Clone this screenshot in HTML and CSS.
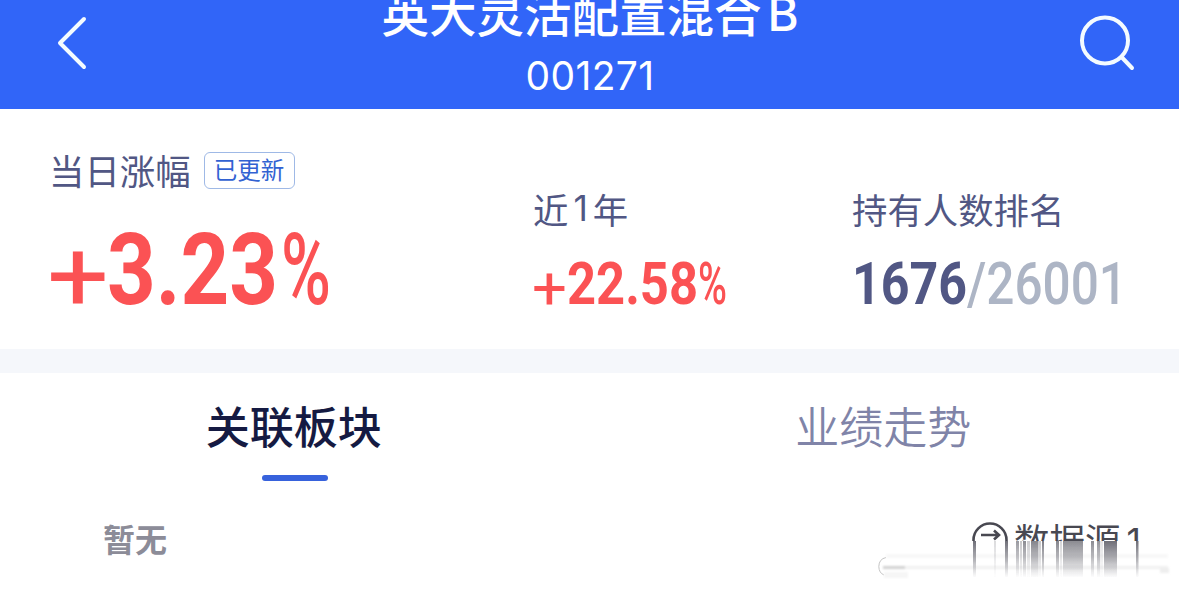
FILE: index.html
```html
<!DOCTYPE html>
<html lang="zh-CN">
<head>
    <meta charset="UTF-8">
    <meta name="viewport" content="width=device-width, initial-scale=1.0">
    <title>英大灵活配置混合B</title>
    <link rel="stylesheet" href="styles.css">
</head>
<body>
<header class="header">
    <svg class="back" viewBox="0 0 60 58" width="60" height="58">
        <path d="M29 5 L5 29 L29 53"/>
    </svg>
    <div class="title">
        <h1>英大灵活配置混合<span>B</span></h1>
        <p>001271</p>
    </div>
    <svg class="search" viewBox="0 0 60 60" width="60" height="60">
        <circle cx="28" cy="26.500" r="23"/>
        <path d="M44.500 43 L55 54"/>
    </svg>
</header>

<section class="stats">
    <div class="stat today">
        <div class="label">当日涨幅<span class="badge">已更新</span></div>
        <svg class="number red" width="290" height="90">
            <text class="sign" x="-4" y="91" font-size="100" textLength="62" lengthAdjust="spacingAndGlyphs">+</text>
            <text x="56" y="84" font-size="101" textLength="171" lengthAdjust="spacingAndGlyphs">3.23</text>
            <text class="percent" x="230" y="84" font-size="101" textLength="50" lengthAdjust="spacingAndGlyphs">%</text>
        </svg>
    </div>
    <div class="stat year">
        <div class="label">近<span class="one">1</span>年</div>
        <svg class="number red" width="220" height="60">
            <text class="sign" x="-1" y="57" font-size="59" textLength="35" lengthAdjust="spacingAndGlyphs">+</text>
            <text x="34" y="52" font-size="60" textLength="131" lengthAdjust="spacingAndGlyphs">22.58</text>
            <text class="percent" x="165" y="52" font-size="60" textLength="29" lengthAdjust="spacingAndGlyphs">%</text>
        </svg>
    </div>
    <div class="stat rank">
        <div class="label">持有人数排名</div>
        <svg class="number" width="290" height="60">
            <text class="place" x="0" y="52" font-size="60" textLength="115" lengthAdjust="spacingAndGlyphs">1676</text>
            <text class="total" x="115" y="52" font-size="60" textLength="160" lengthAdjust="spacingAndGlyphs">/26001</text>
        </svg>
    </div>
</section>

<nav class="tabs">
    <div class="tab active">关联板块</div>
    <div class="tab">业绩走势</div>
</nav>

<section class="content">
    <p class="empty">暂无</p>
    <div class="source">
        <div class="source-top">
            <svg class="source-icon" width="36" height="36" viewBox="0 0 36 36">
                <circle cx="18" cy="18" r="16.500"/>
                <path d="M9 13 H27 M22 8.500 L27 13 L22 17.500"/>
            </svg>
            <span class="source-name">数据源</span><span class="index">1</span>
        </div>
        <!-- faded lower edge of the source button -->
        <svg class="fade" width="301" height="49" viewBox="878 541 301 49">
            <defs>
                <linearGradient id="down" x1="0" y1="541" x2="0" y2="578" gradientUnits="userSpaceOnUse">
                    <stop offset="0" stop-color="#55555f" stop-opacity="0.85"/>
                    <stop offset="0.5" stop-color="#66666f" stop-opacity="0.5"/>
                    <stop offset="1" stop-color="#77777f" stop-opacity="0"/>
                </linearGradient>
                <filter id="soft" x="-10%" y="-50%" width="120%" height="200%">
                    <feGaussianBlur stdDeviation="1"/>
                </filter>
                <filter id="streak" x="-5%" y="0" width="110%" height="100%">
                    <feGaussianBlur stdDeviation="0.6 0"/>
                </filter>
            </defs>
            <path d="M886 557.500 Q879 559 878.800 566.500 Q879 573 884 575" fill="none" stroke="#c4c4c4"/>
            <g filter="url(#soft)">
                <rect x="886" y="554" width="282" height="4" fill="#f8f8f8"/>
                <rect x="884" y="566" width="284" height="3" fill="#f1f1f1"/>
                <rect x="883" y="566" width="22" height="3" fill="#d2d2d2"/>
                <rect x="1160" y="568" width="9" height="5" fill="#eee"/>
                <rect x="884" y="572" width="24" height="6" fill="#f6f6f6"/>
            </g>
            <g fill="url(#down)" filter="url(#streak)">
                <rect x="973" y="541" width="3" height="36"/>
                <rect x="994" y="541" width="2" height="36" opacity="0.25"/>
                <rect x="1005" y="541" width="3" height="36"/>
                <rect x="1016" y="541" width="3" height="36" opacity="0.7"/>
                <rect x="1020" y="541" width="2" height="36" opacity="0.4"/>
                <rect x="1023" y="541" width="3" height="36" opacity="0.8"/>
                <rect x="1027" y="541" width="3" height="36" opacity="0.35"/>
                <rect x="1031" y="541" width="7" height="36" opacity="0.85"/>
                <rect x="1038" y="541" width="3" height="36" opacity="0.4"/>
                <rect x="1042" y="541" width="2" height="36" opacity="0.9"/>
                <rect x="1056" y="541" width="3" height="36" opacity="0.85"/>
                <rect x="1060" y="541" width="2" height="36" opacity="0.3"/>
                <rect x="1063" y="541" width="20" height="36" opacity="0.8"/>
                <rect x="1091" y="541" width="3" height="36" opacity="0.8"/>
                <rect x="1097" y="541" width="3" height="36" opacity="0.75"/>
                <rect x="1100" y="541" width="3" height="36" opacity="0.2"/>
                <rect x="1104" y="541" width="13" height="36"/>
                <rect x="1136" y="541" width="2.500" height="36"/>
            </g>
        </svg>
    </div>
</section>
</body>
</html>
```

FILE: styles.css
```css
* {
    box-sizing: border-box;
    margin: 0;
    padding: 0;
}

body {
    width: 1179px;
    height: 590px;
    overflow: hidden;
    background: #fff;
    font-family: Inter, "Noto Sans CJK SC", sans-serif;
    color: #515784;
}

/* Header */
.header {
    display: flex;
    justify-content: space-between;
    height: 109px;
    padding: 14px 42px 0 55px;
    background: #3165f8;
    color: #fff;
    overflow: hidden;
}

.header svg {
    fill: none;
    stroke: #f4fbff;
    stroke-width: 4;
    stroke-linecap: round;
    stroke-linejoin: round;
}

.title {
    margin-top: -24px;
    margin-right: 12px;
    text-align: center;
}

.title h1 {
    height: 58px;
    font-size: 47.5px;
    line-height: 50px;
    font-weight: 500;
    white-space: nowrap;
}

.title h1 span {
    margin-left: 6px;
    line-height: 1;
    vertical-align: 1px;
}

.title p {
    font-size: 39px;
    line-height: 56px;
    letter-spacing: 0.4px;
}

/* Stats */
.stats {
    display: grid;
    grid-template-columns: 482px 319px 1fr;
    height: 264px;
    padding-left: 51px;
    border-bottom: 24px solid #f5f7fb;
}

.stat {
    padding-top: 78px;
}

.today {
    padding-top: 41px;
}

.label {
    display: flex;
    align-items: center;
    height: 42px;
    font-size: 35.4px;
    white-space: nowrap;
}

.today .label {
    height: 40px;
    margin: -1px 0 2px -2px;
}

.badge {
    margin: 2px 0 0 13px;
    width: 91px;
    height: 37px;
    border: 1px solid #9fb9e6;
    border-radius: 6px;
    color: #3262d2;
    font-size: 23.5px;
    line-height: 35px;
    text-align: center;
}

.one {
    margin: 0 5px;
}

.number {
    display: block;
    margin-top: 23px;
    overflow: visible;
    font-family: Roboto, sans-serif;
    font-weight: 700;
}

.today .number {
    margin-top: 31px;
}

.red {
    fill: #fb5254;
}

.sign {
    font-weight: 400;
}

.percent {
    font-weight: 500;
}

.place {
    fill: #515784;
}

.total {
    fill: #adb5c5;
    font-weight: 500;
}

/* Tabs */
.tabs {
    display: grid;
    grid-template-columns: 1fr 1fr;
    height: 115px;
    text-align: center;
}

.tab {
    padding-top: 23px;
    font-size: 44px;
    line-height: 64px;
    color: #8084a8;
    font-weight: 350;
    text-indent: -2px;
}

.active {
    color: #151a42;
    font-weight: 500;
}

.active::after {
    content: "";
    display: block;
    width: 66px;
    height: 6px;
    margin: 15px auto 0;
    border-radius: 3px;
    background: #3762dc;
}

/* Content */
.content {
    display: flex;
    justify-content: space-between;
    padding: 32px 0 0 103px;
}

.empty {
    font-size: 32px;
    line-height: 42px;
    font-weight: 700;
    color: #8c8c98;
}

.source {
    width: 301px;
    color: #484851;
}

.source-top {
    display: flex;
    height: 21px;
    padding-left: 94px;
    overflow: hidden;
    font-size: 35.5px;
    line-height: 44px;
}

.source-icon {
    flex: none;
    margin: 2px 6px 0 0;
    fill: none;
    stroke: #484851;
    stroke-width: 2.6;
}

.index {
    margin-left: 6px;
}

.fade {
    display: block;
}
```
